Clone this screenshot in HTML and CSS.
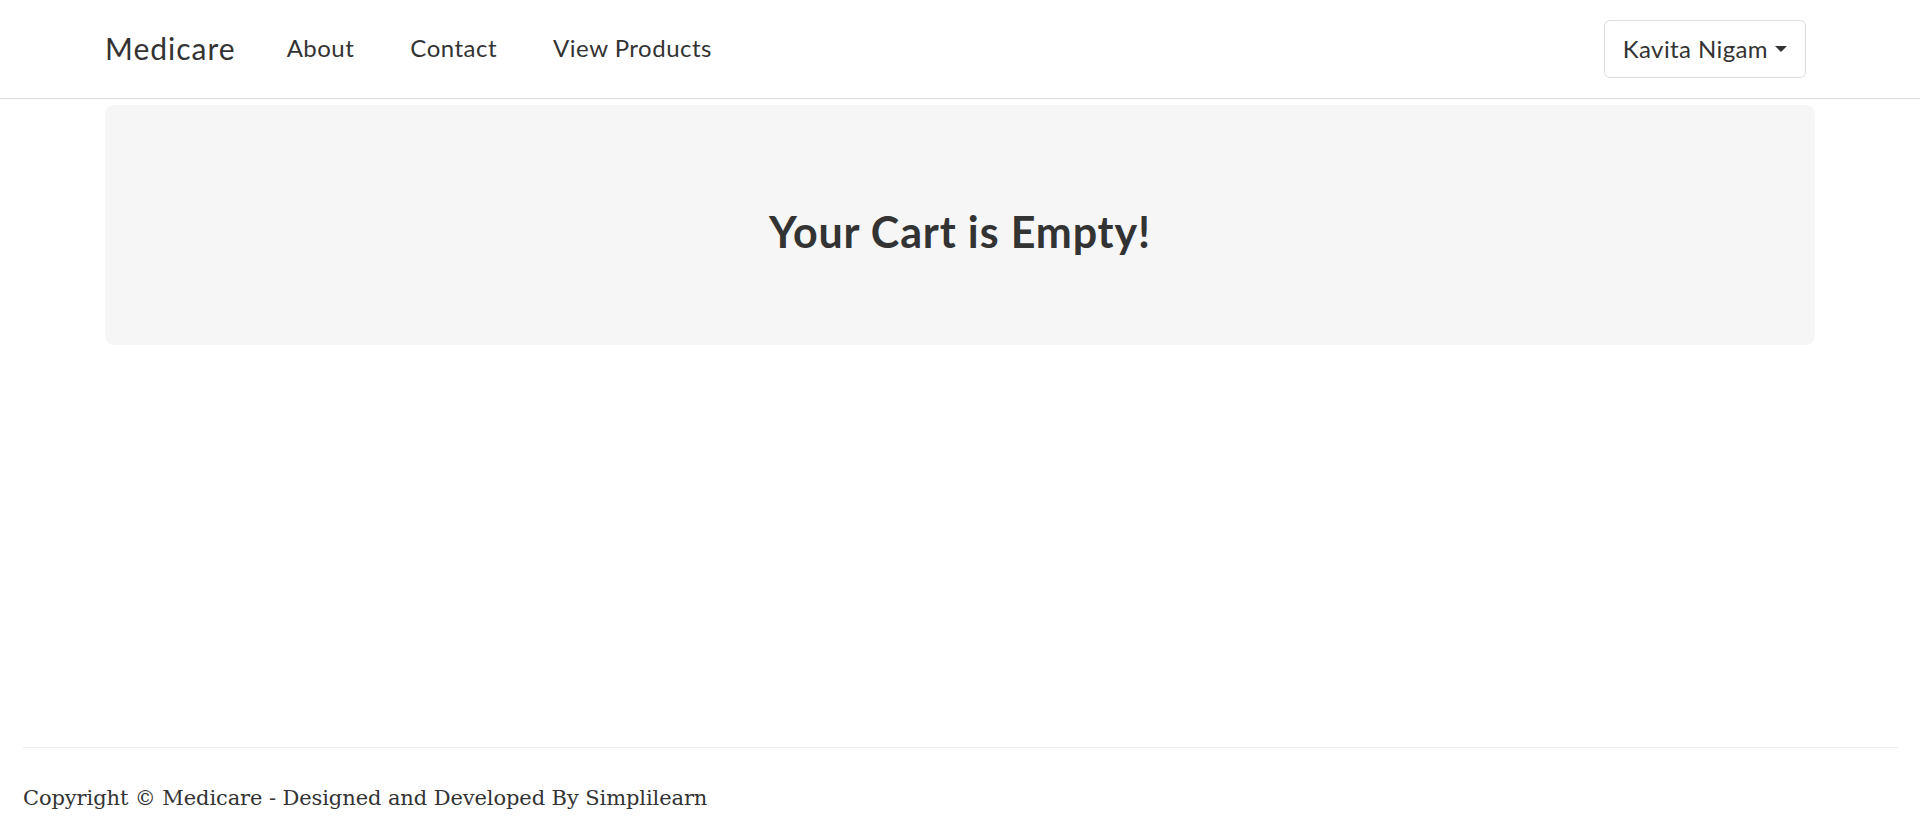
FILE: index.html
```html
<!DOCTYPE html>
<html lang="en">
<head>
<meta charset="utf-8">
<title>Medicare - Cart</title>
<link rel="stylesheet" href="styles.css">
</head>
<body>
<div class="page">
  <header class="navbar">
    <div class="nav-inner">
      <a class="brand" href="#">Medicare</a>
      <ul class="nav-links">
        <li><a href="#">About</a></li>
        <li><a href="#">Contact</a></li>
        <li><a href="#">View Products</a></li>
      </ul>
      <div class="user">
        <button class="user-btn" type="button">Kavita Nigam <span class="caret"></span></button>
      </div>
    </div>
  </header>
  <main class="container">
    <div class="jumbotron">
      <h2 class="cart-title">Your Cart is Empty!</h2>
    </div>
  </main>
  <footer class="footer">
    <hr class="footer-rule">
    <p class="copyright">Copyright © Medicare - Designed and Developed By Simplilearn</p>
  </footer>
</div>
</body>
</html>
```

FILE: styles.css
```css
* { box-sizing: border-box; }
html, body { margin: 0; padding: 0; background: #fff; }
body {
  font-family: "Lato", "Noto Sans", sans-serif;
  color: #333;
}
.page {
  min-height: 100vh;
  display: flex;
  flex-direction: column;
}
.navbar {
  height: 99px;
  border-bottom: 1px solid #dddddd;
}
.nav-inner {
  width: 1710px;
  height: 100%;
  margin: 0 auto;
  padding-right: 9px;
  display: flex;
  align-items: center;
}
.brand {
  padding-bottom: 3px;
  font-size: 30px;
  font-weight: 400;
  letter-spacing: 1px;
  color: #333;
  text-decoration: none;
  line-height: 1;
}
.nav-links {
  display: flex;
  gap: 56px;
  list-style: none;
  margin: 0 0 0 51px;
  padding: 0 0 3px;
}
.nav-links a {
  font-size: 24px;
  font-weight: 400;
  letter-spacing: 0.5px;
  color: #333;
  text-decoration: none;
}
.user { margin-left: auto; }
.user-btn {
  display: flex;
  align-items: center;
  gap: 7px;
  height: 58px;
  padding: 0 18px 2px;
  background: #fff;
  border: 1px solid #dddddd;
  border-radius: 6px;
  font-family: inherit;
  font-size: 24px;
  font-weight: 400;
  letter-spacing: 0.4px;
  color: #333;
}
.caret {
  width: 0;
  height: 0;
  margin-top: 2px;
  border-top: 6px solid #333;
  border-left: 6px solid transparent;
  border-right: 6px solid transparent;
}
.container {
  width: 1710px;
  margin: 6px auto 0;
}
.jumbotron {
  height: 240px;
  padding-top: 14px;
  background: #f6f6f6;
  border-radius: 9px;
  display: flex;
  align-items: center;
  justify-content: center;
}
.cart-title {
  margin: 0;
  font-size: 43px;
  font-weight: 700;
  letter-spacing: 0.85px;
  line-height: 1.1;
  color: #333;
}
.footer {
  margin-top: auto;
  padding: 0 22px 0 23px;
}
.footer-rule {
  margin: 0;
  border: 0;
  border-top: 1px solid #eeeeee;
}
.copyright {
  margin: 34px 0 19px;
  font-family: "DejaVu Serif", "Liberation Serif", serif;
  font-size: 21px;
  letter-spacing: -0.1px;
  line-height: 33px;
  color: #333;
}
```
